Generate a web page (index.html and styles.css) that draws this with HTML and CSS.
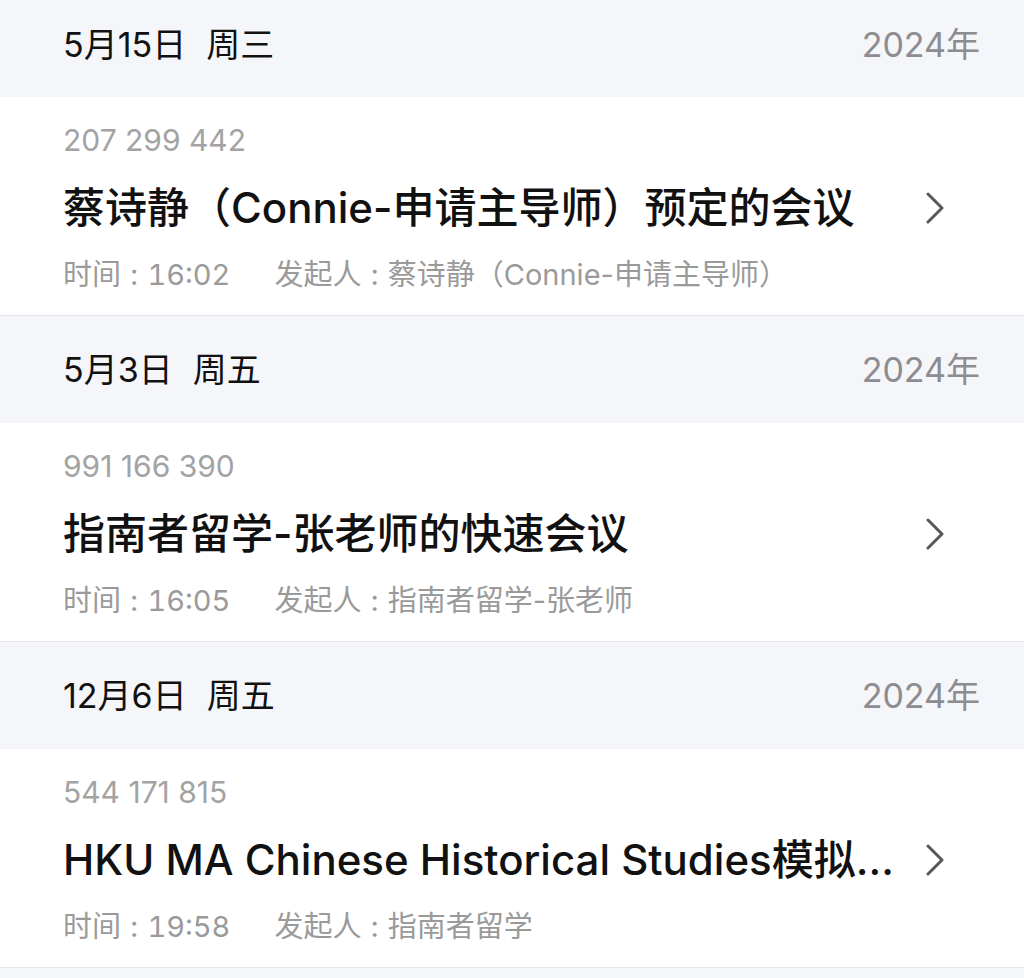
FILE: index.html
```html
<!DOCTYPE html>
<html lang="zh-CN">
<head>
<meta charset="utf-8">
<title>会议记录</title>
<link rel="stylesheet" href="styles.css">
</head>
<body>
<div class="list">
  <div class="day-head first">
    <span class="day-date"><span>5月15日</span><span class="weekday">周三</span></span>
    <span class="day-year">2024年</span>
  </div>
  <div class="meeting">
    <div class="meeting-body">
      <div class="meeting-id">207 299 442</div>
      <div class="meeting-title">蔡诗静（Connie-申请主导师）预定的会议</div>
      <div class="meeting-meta"><span class="meta-time">时间<span class="colon">:</span><span class="num">16:02</span></span><span>发起人<span class="colon">:</span>蔡诗静（Connie-申请主导师）</span></div>
    </div>
    <svg class="chevron" viewBox="0 0 20 32" width="20" height="32"><polyline points="3,2 17,16 3,30" fill="none" stroke="#58585c" stroke-width="3" stroke-linecap="round" stroke-linejoin="round"/></svg>
  </div>

  <div class="day-head">
    <span class="day-date"><span>5月3日</span><span class="weekday">周五</span></span>
    <span class="day-year">2024年</span>
  </div>
  <div class="meeting">
    <div class="meeting-body">
      <div class="meeting-id">991 166 390</div>
      <div class="meeting-title">指南者留学-张老师的快速会议</div>
      <div class="meeting-meta"><span class="meta-time">时间<span class="colon">:</span><span class="num">16:05</span></span><span>发起人<span class="colon">:</span>指南者留学-张老师</span></div>
    </div>
    <svg class="chevron" viewBox="0 0 20 32" width="20" height="32"><polyline points="3,2 17,16 3,30" fill="none" stroke="#58585c" stroke-width="3" stroke-linecap="round" stroke-linejoin="round"/></svg>
  </div>

  <div class="day-head">
    <span class="day-date"><span>12月6日</span><span class="weekday">周五</span></span>
    <span class="day-year">2024年</span>
  </div>
  <div class="meeting">
    <div class="meeting-body">
      <div class="meeting-id">544 171 815</div>
      <div class="meeting-title">HKU MA Chinese Historical Studies模拟面试</div>
      <div class="meeting-meta"><span class="meta-time">时间<span class="colon">:</span><span class="num">19:58</span></span><span>发起人<span class="colon">:</span>指南者留学</span></div>
    </div>
    <svg class="chevron" viewBox="0 0 20 32" width="20" height="32"><polyline points="3,2 17,16 3,30" fill="none" stroke="#58585c" stroke-width="3" stroke-linecap="round" stroke-linejoin="round"/></svg>
  </div>
  <div class="day-head tail"></div>
</div>
</body>
</html>
```
FILE: styles.css
```css
html, body {
  margin: 0;
  padding: 0;
  background: #f5f6fa;
  font-family: "Inter", "Noto Sans CJK SC", "Noto Sans", sans-serif;
}

.list {
  display: flex;
  flex-direction: column;
}

.day-head {
  height: 107px;
  box-sizing: border-box;
  display: flex;
  align-items: center;
  justify-content: space-between;
  padding: 0 44px 0 63px;
  background: #f5f6fa;
}

.day-head.first {
  height: 97px;
  padding-bottom: 7px;
}

.day-date {
  display: flex;
  font-size: 34px;
  color: #111;
  line-height: 40px;
}

.weekday {
  margin-left: 20px;
}

.day-year {
  font-size: 34px;
  color: #8c8c91;
  line-height: 40px;
}

.meeting {
  display: flex;
  align-items: flex-start;
  background: #fff;
  border-bottom: 1px solid #e7e7ea;
  padding: 25px 79px 20px 63px;
}

.meeting-body {
  flex: 1;
  min-width: 0;
  display: flex;
  flex-direction: column;
}

.meeting-id {
  height: 36px;
  font-size: 30px;
  line-height: 36px;
  color: #a3a3a3;
}

.meeting-title {
  height: 56px;
  margin-top: 22px;
  font-size: 42px;
  line-height: 56px;
  font-weight: 500;
  color: #111;
  white-space: nowrap;
  overflow: hidden;
  text-overflow: ellipsis;
}

.meeting-meta {
  height: 40px;
  margin-top: 19px;
  font-size: 29px;
  line-height: 40px;
  color: #9a9a9a;
  white-space: nowrap;
  display: flex;
}

.num {
  font-variant-numeric: tabular-nums;
}

.colon {
  margin: 0 9px;
}

.meta-time {
  margin-right: 44px;
}

.chevron {
  flex: none;
  margin-left: 30px;
  margin-top: 70px;
}

.day-head.tail {
  height: 20px;
}
```
